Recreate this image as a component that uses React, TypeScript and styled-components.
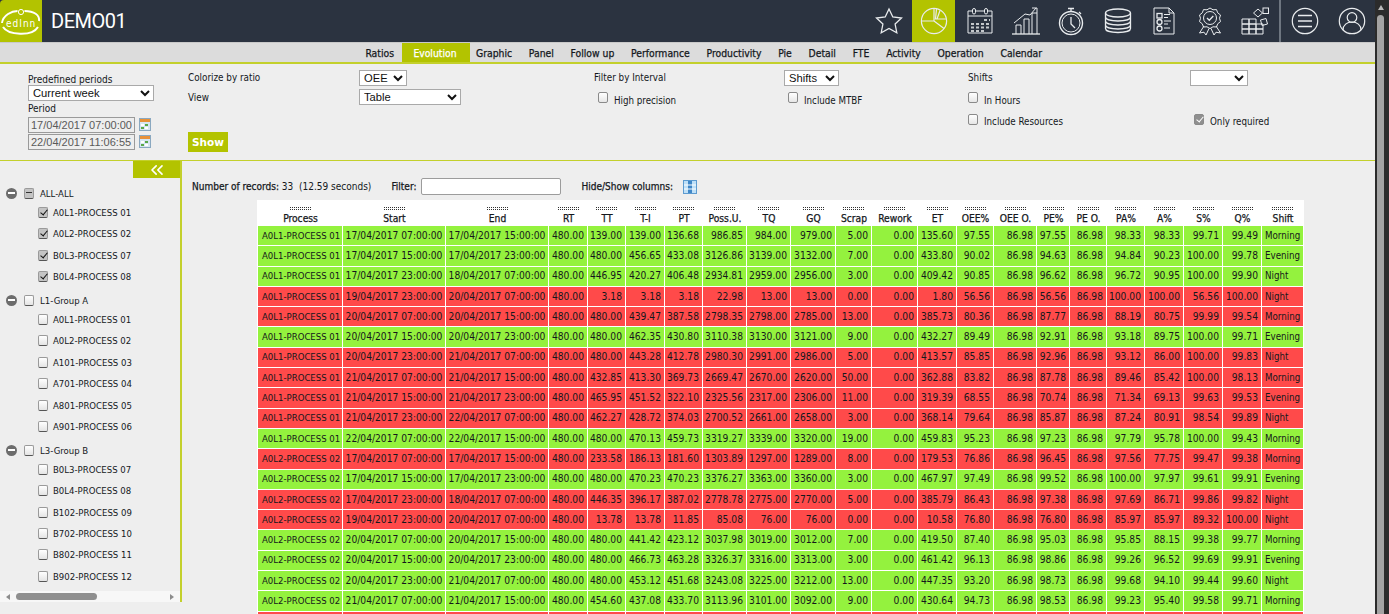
import React from 'react';
import styled, { createGlobalStyle } from 'styled-components';
import { ChevronsLeft } from 'lucide-react';

const GlobalStyle = createGlobalStyle`
  html, body {
    margin: 0;
    height: 100%;
    overflow: hidden;
    background: #eeeeee;
  }
  * { box-sizing: border-box; }
  #root {
    height: 100%;
    font-family: 'DejaVu Sans Condensed', 'DejaVu Sans', sans-serif;
    font-size: 10px;
    color: #14181c;
  }
`;

const Page = styled.div`
  display: flex;
  height: 614px;
  overflow: hidden;
`;

const Main = styled.div`
  flex: 1;
  min-width: 0;
  display: flex;
  flex-direction: column;
  overflow: hidden;
`;

const Rail = styled.div`
  width: 14px;
  background: #2b2b2b;
  padding: 5px 5px 0 2px;
  display: flex;
  flex-direction: column;
  align-items: center;
  gap: 5px;
`;

const RailArrow = styled.div`
  width: 0;
  height: 0;
  border-left: 3.5px solid transparent;
  border-right: 3.5px solid transparent;
  border-bottom: 5px solid #b8b8b8;
`;

const RailThumb = styled.div`
  width: 7px;
  flex: 1;
  background: #a3a3a3;
  border-radius: 4px 4px 0 0;
`;

const Header = styled.header`
  display: flex;
  align-items: stretch;
  height: 43px;
  flex: none;
  background: #2b3340;
  border-bottom: 1px solid #c9c9c9;
`;

const Logo = styled.div`
  width: 42px;
  background: #b3c300;
  border-top-left-radius: 4px;
  display: flex;
  align-items: center;
  justify-content: center;
`;

const Title = styled.h1`
  margin: 0 0 0 9px;
  align-self: center;
  font-family: Roboto, sans-serif;
  font-weight: 400;
  font-size: 20px;
  letter-spacing: -0.5px;
  color: #ffffff;
`;

const IconBar = styled.div`
  margin-left: auto;
  display: flex;
  align-items: stretch;
`;

const IconCell = styled.div<{ $w: number; $active?: boolean }>`
  width: ${({ $w }) => $w}px;
  display: flex;
  align-items: center;
  justify-content: center;
  background: ${({ $active }) => ($active ? '#b3c300' : 'transparent')};
`;

const Divider = styled.div`
  width: 2px;
  margin: 0 0 0 1px;
  background: #6e7680;
`;

const NavBar = styled.nav`
  display: flex;
  align-items: stretch;
  flex: none;
  height: 21px;
  padding-left: 357px;
  background: #dcdcdc;
  border-bottom: 2px solid #c3d02c;
`;

const NavItem = styled.a<{ $active?: boolean }>`
  display: flex;
  align-items: center;
  padding: ${({ $active }) => ($active ? '0 13px 0 11px' : '0 8.4px')};
  margin-right: ${({ $active }) => ($active ? '-2px' : '0')};
  font-size: 10.3px;
  -webkit-text-stroke: 0.25px currentColor;
  color: ${({ $active }) => ($active ? '#ffffff' : '#14181c')};
  background: ${({ $active }) => ($active ? '#b3c300' : 'transparent')};
`;

const FilterBar = styled.section`
  display: flex;
  flex: none;
  height: 97px;
  padding: 5px 0 0 28px;
  border-bottom: 1px solid #c3d02c;
`;

const PeriodBlock = styled.div`
  width: 160px;
  padding-top: 5px;
  display: flex;
  flex-direction: column;
  align-items: flex-start;
`;

const PeriodLabel = styled.label`
  line-height: 12px;
  font-size: 10px;
`;

const RangeLabel = styled(PeriodLabel)`
  margin: 2px 0 1px;
`;

const DateRow = styled.div`
  display: flex;
  align-items: center;
  gap: 4px;
  height: 17px;
`;

const DateInput = styled.input`
  width: 107px;
  height: 16px;
  padding: 0 2px;
  border: 1px solid #9a9a9a;
  background: #eeeeee;
  color: #5a5a5a;
  font-family: 'Liberation Sans', sans-serif;
  font-size: 11px;
`;

const OptionsGrid = styled.div`
  display: grid;
  grid-template-columns: 171px 235px 190px 184px 222px auto;
  grid-template-rows: 17px 22px 21px 23px;
  align-items: center;
`;

const OptLabel = styled.span`
  font-size: 9.8px;
`;

const Select = styled.select<{ $w: number }>`
  width: ${({ $w }) => $w}px;
  height: 16px;
  padding: 0;
  border: 1px solid #a9a9a9;
  border-radius: 0;
  background-color: #ffffff;
  color: #111111;
  font-family: 'Liberation Sans', sans-serif;
  font-size: 11.2px;
`;

const PeriodSelect = styled(Select)`
  margin-top: -1px;
`;

const CheckLabel = styled.label<{ $flush?: boolean }>`
  display: flex;
  align-items: center;
  gap: 6px;
  margin-top: 6px;
  padding-left: ${({ $flush }) => ($flush ? '0' : '4px')};
  font-size: 9.7px;
`;

const ResourcesCheck = styled(CheckLabel)`
  grid-column: 5;
  grid-row: 3;
`;

const RequiredCheck = styled(CheckLabel)`
  grid-column: 6;
  grid-row: 3;
`;

const Box = styled.input`
  appearance: none;
  flex: none;
  position: relative;
  width: 10px;
  height: 11px;
  margin: -5px 0 0;
  border: 1px solid #8a8a8a;
  border-radius: 2px;
  background: linear-gradient(#ffffff, #e6e6e6);

  &:checked {
    background: #8f8f8f;
  }
  &:checked::after {
    content: '';
    position: absolute;
    left: 2.5px;
    top: 0;
    width: 3px;
    height: 6px;
    border: solid #ffffff;
    border-width: 0 1.5px 1.5px 0;
    transform: rotate(40deg);
  }
`;

const ShowButton = styled.button`
  width: 40px;
  height: 20px;
  padding: 0;
  border: none;
  background: #b3c300;
  color: #ffffff;
  font-family: 'DejaVu Sans', sans-serif;
  font-size: 10.5px;
  font-weight: 700;
  align-self: end;
  grid-column: 1;
  grid-row: 4;
`;

const Body = styled.div`
  flex: 1;
  min-height: 0;
  display: flex;
  align-items: flex-start;
`;

const Sidebar = styled.aside`
  flex: none;
  width: 182px;
  height: 441px;
  border-right: 2px solid #c3d02c;
  display: flex;
  flex-direction: column;
`;

const CollapseButton = styled.div`
  align-self: flex-end;
  flex: none;
  width: 47px;
  height: 17px;
  background: #b3c300;
  color: #ffffff;
  display: flex;
  align-items: center;
  justify-content: center;
`;

const Tree = styled.div`
  flex: 1;
  padding: 7px 0 0 6px;
`;

const GroupRow = styled.div<{ $first?: boolean }>`
  display: flex;
  align-items: center;
  height: 16.6px;
  margin-top: ${({ $first }) => ($first ? '0' : '5px')};
`;

const Collapser = styled.span`
  position: relative;
  flex: none;
  width: 11px;
  height: 11px;
  margin-right: 7px;
  border-radius: 50%;
  background: #6c6c6c;

  &::after {
    content: '';
    position: absolute;
    left: 2px;
    right: 2px;
    top: 4.5px;
    height: 2px;
    background: #ffffff;
  }
`;

const TreeBox = styled.span<{ $state?: 'checked' | 'mixed' }>`
  position: relative;
  flex: none;
  width: 10px;
  height: 11px;
  border: 1px solid #9a9a9a;
  border-bottom-color: #555555;
  border-radius: 2px;
  background: ${({ $state }) => ($state ? '#c4c4c4' : 'linear-gradient(#ffffff, #e4e4e4)')};

  &::after {
    content: '';
    position: absolute;
    ${({ $state }) =>
      $state === 'checked'
        ? `left: 2.5px; top: 0; width: 3px; height: 6px; border: solid #111; border-width: 0 1.5px 1.5px 0; transform: rotate(40deg);`
        : $state === 'mixed'
          ? `left: 1px; right: 1px; top: 3.5px; height: 1px; background: #333;`
          : ''}
  }
`;

const ChildRow = styled.div`
  display: flex;
  align-items: center;
  height: 21.4px;
  padding-left: 32px;
`;

const TreeText = styled.span`
  margin-left: 6px;
  font-size: 9.5px;
  white-space: nowrap;
`;

const ChildText = styled(TreeText)`
  margin-left: 5px;
`;

const HScroll = styled.div`
  flex: none;
  height: 11px;
  background: #f7f7f7;
  display: flex;
  align-items: center;
  padding: 0 6px;
  gap: 6px;
`;

const HArrow = styled.span<{ $right?: boolean }>`
  flex: none;
  width: 0;
  height: 0;
  border-top: 3.5px solid transparent;
  border-bottom: 3.5px solid transparent;
  ${({ $right }) => ($right ? 'border-left: 4px solid #8c8c8c; margin-left: auto;' : 'border-right: 4px solid #8c8c8c;')}
`;

const HThumb = styled.span`
  width: 81px;
  height: 7px;
  border-radius: 4px;
  background: #8f8f8f;
`;

const Content = styled.div`
  flex: 1;
  min-width: 0;
  padding: 17px 0 0 10px;
`;

const Toolbar = styled.div`
  display: flex;
  align-items: center;
  height: 17px;
  font-size: 10px;
`;

const Strong = styled.span`
  font-size: 10px;
  -webkit-text-stroke: 0.25px currentColor;
`;

const FilterField = styled.label`
  display: flex;
  align-items: center;
  gap: 5px;
  margin-left: 20px;
`;

const FilterInput = styled.input`
  width: 140px;
  height: 17px;
  padding: 0 2px;
  border: 1px solid #9c9c9c;
  border-radius: 2px;
  background: #ffffff;
`;

const ColumnToggle = styled.div`
  display: flex;
  align-items: center;
  gap: 10px;
  margin-left: 20px;
`;

const Grid = styled.table`
  margin: 5px 0 0 65px;
  width: 1047px;
  table-layout: fixed;
  border-collapse: separate;
  border-spacing: 0;
  background: #ffffff;
  border-left: 1px solid #ffffff;
`;

const HeadCell = styled.th`
  height: 26px;
  padding: 7px 0 0;
  vertical-align: top;
  text-align: center;
  font-size: 10.2px;
  font-weight: 400;
  -webkit-text-stroke: 0.25px currentColor;
  line-height: 13px;
  white-space: nowrap;
  overflow: hidden;
`;

const Grip = styled.span`
  display: block;
  width: 22px;
  height: 3px;
  margin: 0 auto 2px;
  background:
    repeating-linear-gradient(90deg, #333333 0 1px, transparent 1px 2px) 0 0 / 100% 1px no-repeat,
    repeating-linear-gradient(90deg, #333333 0 1px, transparent 1px 2px) 0 2px / 100% 1px no-repeat;
`;

const Row = styled.tr<{ $bad: boolean }>`
  height: 20.3px;
  background: ${({ $bad }) => ($bad ? '#ff4a4a' : '#94f23e')};
`;

const Cell = styled.td<{ $align?: 'left' | 'center' }>`
  padding: ${({ $align }) => ($align === 'center' ? '0' : $align === 'left' ? '0 0 0 3px' : '0 3px 0 0')};
  border-right: 1px solid #ffffff;
  border-bottom: 1px solid #ffffff;
  text-align: ${({ $align }) => $align ?? 'right'};
  font-size: 10.2px;
  line-height: 12px;
  white-space: nowrap;
  overflow: hidden;
`;

const ProcessCell = styled(Cell)`
  padding-left: 4px;
  font-size: 9.5px;
`;

const ShiftCell = styled(Cell)`
  font-size: 9.7px;
`;

const line = { fill: 'none', stroke: '#e9ecee', strokeWidth: 1 };

const LogoMark = () => (
  <svg width="42" height="36" viewBox="0 0 42 36">
    <path d="M2 20C3 12 12 8 17.500 8M24.500 8C34 8 40 12 39 18" fill="none" stroke="#fff" strokeWidth="2" />
    <path d="M3 24C8 32 32 34 38 24" fill="none" stroke="#fff" strokeWidth="2" />
    <circle cx="21" cy="9" r="2.600" fill="none" stroke="#fff" strokeWidth="1" />
    <text x="6" y="24" fontFamily="'DejaVu Sans Condensed', sans-serif" fontSize="10" fill="#fff" letterSpacing="1">
      edInn
    </text>
  </svg>
);

const StarIcon = () => (
  <svg width="30" height="30" viewBox="0 0 30 30" {...line}>
    <path d="M15 3l3.800 8 8.700 1-6.400 6 1.700 8.700L15 22.400l-7.800 4.300 1.700-8.700-6.400-6 8.700-1z" strokeWidth="1.300" />
  </svg>
);

const PieIcon = () => (
  <svg width="30" height="30" viewBox="0 0 30 30" {...line}>
    <circle cx="15" cy="15" r="12.600" strokeWidth="1.200" />
    <path d="M15 15H2.400M15 15V2.400M15 15l10 7.600M17.500 3l-1 10 10.500 0M21 4.500l-3 8.500" strokeWidth="1.200" />
  </svg>
);

const CalendarIcon = () => (
  <svg width="30" height="30" viewBox="0 0 30 30" {...line}>
    <path d="M7 5H3v22h24V5h-4M11 5h8" />
    <rect x="7.500" y="2.500" width="3" height="5.500" rx="1.500" />
    <rect x="19.500" y="2.500" width="3" height="5.500" rx="1.500" />
    <path d="M3 10h24" />
    <path
      d="M6 18h3M11 18h3M16 18h3M21 18h3M6 21.500h3M11 21.500h3M16 21.500h3M21 21.500h3M6 25h3M11 25h3M16 25h3M19 14h3M24 14h1"
      strokeWidth="2"
      stroke="#c4c8cb"
    />
  </svg>
);

const ChartIcon = () => (
  <svg width="30" height="30" viewBox="0 0 30 30" {...line}>
    <path d="M1 28h28" strokeWidth="1.300" />
    <path d="M5 28v-9h5v9M13 28V13h5v15M21 28V7h5v21" />
    <path d="M3 17L14 8l5 1 6-7" />
    <path d="M21 2h5v5" />
  </svg>
);

const WatchIcon = () => (
  <svg width="30" height="30" viewBox="0 0 30 30" {...line}>
    <circle cx="15" cy="17" r="11.500" strokeWidth="1.400" />
    <circle cx="15" cy="17" r="9" />
    <path d="M15 11v7l4 4M12 2.500h6M15 3v3M23 6l2 2" strokeWidth="1.300" />
  </svg>
);

const CoinsIcon = () => (
  <svg width="30" height="28" viewBox="0 0 30 28" {...line}>
    <ellipse cx="15" cy="6" rx="12.500" ry="4" strokeWidth="1.300" />
    <path
      d="M2.500 6v15.500c0 2.500 5.600 4 12.500 4s12.500-1.500 12.500-4V6M2.500 10c0 2.500 5.600 4 12.500 4s12.500-1.500 12.500-4M2.500 14c0 2.500 5.600 4 12.500 4s12.500-1.500 12.500-4M2.500 18c0 2.500 5.600 4 12.500 4s12.500-1.500 12.500-4"
      strokeWidth="1.300"
    />
  </svg>
);

const ChecklistIcon = () => (
  <svg width="30" height="30" viewBox="0 0 30 30" {...line}>
    <path d="M5 2h15l5 5v21H5z" />
    <path d="M20 2v5h5" />
    <rect x="8" y="7.500" width="5" height="4.500" strokeWidth="1.300" />
    <circle cx="10.500" cy="16" r="2.500" strokeWidth="1.300" />
    <circle cx="10.500" cy="22.500" r="2.500" strokeWidth="1.300" />
    <path d="M15 8.500h6M15 11.500h4M15 15h7M15 18h4M15 22h6" />
  </svg>
);

const AwardIcon = () => (
  <svg width="30" height="30" viewBox="0 0 30 30" {...line}>
    <path d="M15 2l3 1.800 3.500-.2 1.200 3.200 2.800 2.200-1 3.300 1 3.300-2.800 2.200-1.200 3.200-3.500-.2-3 1.800-3-1.800-3.500.2-1.200-3.200-2.800-2.200 1-3.300-1-3.300 2.800-2.200 1.200-3.200 3.500.2z" />
    <circle cx="15" cy="12" r="6.500" />
    <path d="M12 12l2.300 2.300 4-4.300" strokeWidth="1.300" />
    <path d="M9 20l-4.500 7 4.500-.8 2 2.800 3-6.500M21 20l4.500 7-4.500-.8-2 2.800-3-6.500" />
  </svg>
);

const BlocksIcon = () => (
  <svg width="30" height="30" viewBox="0 0 30 30" {...line}>
    <path d="M2 13h7v5H2zM9 13h7v5H9zM2 18h7v5H2zM9 18h7v5H9zM16 18h7v5h-7zM2 23h7v5H2zM9 23h7v5H9zM16 23h7v5h-7z" />
    <path d="M13.500 7l4.500-4 4.500 4-4.500 4z" />
    <rect x="23" y="2" width="5.500" height="5.500" />
    <path d="M20.500 14l5.500-1.500 1.500 5.500-5.500 1.500z" />
  </svg>
);

const MenuIcon = () => (
  <svg width="28" height="28" viewBox="0 0 28 28" {...line}>
    <circle cx="14" cy="14" r="12.700" strokeWidth="1.200" />
    <path d="M7 8.500h14M7 14h14M7 19.500h14" strokeWidth="1.400" />
  </svg>
);

const UserIcon = () => (
  <svg width="28" height="28" viewBox="0 0 28 28" {...line}>
    <circle cx="14" cy="14" r="12.700" strokeWidth="1.200" />
    <circle cx="14" cy="10.500" r="4.800" strokeWidth="1.200" />
    <path d="M5 23c0-5 4-8 9-8s9 3 9 8" strokeWidth="1.200" />
  </svg>
);

const CalendarSmall = () => (
  <svg width="12" height="13" viewBox="0 0 12 13">
    <rect x="0.500" y="0.500" width="11" height="12" fill="#d6e6f2" stroke="#8aa8c0" />
    <rect x="1" y="1" width="10" height="3" fill="#e8923a" />
    <rect x="2" y="6" width="3" height="2" fill="#ffffff" />
    <rect x="6" y="6" width="3" height="2" fill="#5aa84a" />
    <rect x="2" y="9" width="3" height="2" fill="#5aa84a" />
    <rect x="6" y="9" width="3" height="2" fill="#ffffff" />
  </svg>
);

const ColumnsIcon = () => (
  <svg width="14" height="14" viewBox="0 0 14 14">
    <rect x="0.500" y="0.500" width="13" height="13" fill="#bfe0f7" stroke="#5d9bd0" />
    <rect x="5" y="1" width="4" height="12" fill="#3f87c8" />
    <path d="M1 5h12M1 9h12" stroke="#ffffff" />
  </svg>
);

const topIcons = [
  { w: 46, icon: <StarIcon /> },
  { w: 43, icon: <PieIcon />, active: true },
  { w: 49, icon: <CalendarIcon /> },
  { w: 44, icon: <ChartIcon /> },
  { w: 46, icon: <WatchIcon /> },
  { w: 47, icon: <CoinsIcon /> },
  { w: 46, icon: <ChecklistIcon /> },
  { w: 45, icon: <AwardIcon /> },
  { w: 46, icon: <BlocksIcon /> },
];

const navItems = ['Ratios', 'Evolution', 'Graphic', 'Panel', 'Follow up', 'Performance', 'Productivity', 'Pie', 'Detail', 'FTE', 'Activity', 'Operation', 'Calendar'];

const groups = [
  { name: 'ALL-ALL', state: 'mixed' as const, checked: true, items: ['A0L1-PROCESS 01', 'A0L2-PROCESS 02', 'B0L3-PROCESS 07', 'B0L4-PROCESS 08'] },
  { name: 'L1-Group A', checked: false, items: ['A0L1-PROCESS 01', 'A0L2-PROCESS 02', 'A101-PROCESS 03', 'A701-PROCESS 04', 'A801-PROCESS 05', 'A901-PROCESS 06'] },
  { name: 'L3-Group B', checked: false, items: ['B0L3-PROCESS 07', 'B0L4-PROCESS 08', 'B102-PROCESS 09', 'B702-PROCESS 10', 'B802-PROCESS 11', 'B902-PROCESS 12'] },
];

const columns = [
  ['Process', 85], ['Start', 103], ['End', 103], ['RT', 39], ['TT', 38], ['T-I', 39], ['PT', 38], ['Poss.U.', 44], ['TQ', 44], ['GQ', 45],
  ['Scrap', 36], ['Rework', 46], ['ET', 39], ['OEE%', 37], ['OEE O.', 43], ['PE%', 33], ['PE O.', 37], ['PA%', 38], ['A%', 39], ['S%', 39], ['Q%', 39], ['Shift', 42],
] as const;

// process|start|end|numbers...|shift|r = red row
const records = [
  'A0L1-PROCESS 01|17 07|17 15|480.00 139.00 139.00 136.68 986.85 984.00 979.00 5.00 0.00 135.60 97.55 86.98 97.55 86.98 98.33 98.33 99.71 99.49|Morning|g',
  'A0L1-PROCESS 01|17 15|17 23|480.00 480.00 456.65 433.08 3126.86 3139.00 3132.00 7.00 0.00 433.80 90.02 86.98 94.63 86.98 94.84 90.23 100.00 99.78|Evening|g',
  'A0L1-PROCESS 01|17 23|18 07|480.00 446.95 420.27 406.48 2934.81 2959.00 2956.00 3.00 0.00 409.42 90.85 86.98 96.62 86.98 96.72 90.95 100.00 99.90|Night|g',
  'A0L1-PROCESS 01|19 23|20 07|480.00 3.18 3.18 3.18 22.98 13.00 13.00 0.00 0.00 1.80 56.56 86.98 56.56 86.98 100.00 100.00 56.56 100.00|Night|r',
  'A0L1-PROCESS 01|20 07|20 15|480.00 480.00 439.47 387.58 2798.35 2798.00 2785.00 13.00 0.00 385.73 80.36 86.98 87.77 86.98 88.19 80.75 99.99 99.54|Morning|r',
  'A0L1-PROCESS 01|20 15|20 23|480.00 480.00 462.35 430.80 3110.38 3130.00 3121.00 9.00 0.00 432.27 89.49 86.98 92.91 86.98 93.18 89.75 100.00 99.71|Evening|g',
  'A0L1-PROCESS 01|20 23|21 07|480.00 480.00 443.28 412.78 2980.30 2991.00 2986.00 5.00 0.00 413.57 85.85 86.98 92.96 86.98 93.12 86.00 100.00 99.83|Night|r',
  'A0L1-PROCESS 01|21 07|21 15|480.00 432.85 413.30 369.73 2669.47 2670.00 2620.00 50.00 0.00 362.88 83.82 86.98 87.78 86.98 89.46 85.42 100.00 98.13|Morning|r',
  'A0L1-PROCESS 01|21 15|21 23|480.00 465.95 451.52 322.10 2325.56 2317.00 2306.00 11.00 0.00 319.39 68.55 86.98 70.74 86.98 71.34 69.13 99.63 99.53|Evening|r',
  'A0L1-PROCESS 01|21 23|22 07|480.00 462.27 428.72 374.03 2700.52 2661.00 2658.00 3.00 0.00 368.14 79.64 86.98 85.87 86.98 87.24 80.91 98.54 99.89|Night|r',
  'A0L1-PROCESS 01|22 07|22 15|480.00 480.00 470.13 459.73 3319.27 3339.00 3320.00 19.00 0.00 459.83 95.23 86.98 97.23 86.98 97.79 95.78 100.00 99.43|Morning|g',
  'A0L2-PROCESS 02|17 07|17 15|480.00 233.58 186.13 181.60 1303.89 1297.00 1289.00 8.00 0.00 179.53 76.86 86.98 96.45 86.98 97.56 77.75 99.47 99.38|Morning|r',
  'A0L2-PROCESS 02|17 15|17 23|480.00 480.00 470.23 470.23 3376.27 3363.00 3360.00 3.00 0.00 467.97 97.49 86.98 99.52 86.98 100.00 97.97 99.61 99.91|Evening|g',
  'A0L2-PROCESS 02|17 23|18 07|480.00 446.35 396.17 387.02 2778.78 2775.00 2770.00 5.00 0.00 385.79 86.43 86.98 97.38 86.98 97.69 86.71 99.86 99.82|Night|r',
  'A0L2-PROCESS 02|19 23|20 07|480.00 13.78 13.78 11.85 85.08 76.00 76.00 0.00 0.00 10.58 76.80 86.98 76.80 86.98 85.97 85.97 89.32 100.00|Night|r',
  'A0L2-PROCESS 02|20 07|20 15|480.00 480.00 441.42 423.12 3037.98 3019.00 3012.00 7.00 0.00 419.50 87.40 86.98 95.03 86.98 95.85 88.15 99.38 99.77|Morning|g',
  'A0L2-PROCESS 02|20 15|20 23|480.00 480.00 466.73 463.28 3326.37 3316.00 3313.00 3.00 0.00 461.42 96.13 86.98 98.86 86.98 99.26 96.52 99.69 99.91|Evening|g',
  'A0L2-PROCESS 02|20 23|21 07|480.00 480.00 453.12 451.68 3243.08 3225.00 3212.00 13.00 0.00 447.35 93.20 86.98 98.73 86.98 99.68 94.10 99.44 99.60|Night|g',
  'A0L2-PROCESS 02|21 07|21 15|480.00 454.60 437.08 433.70 3113.96 3101.00 3092.00 9.00 0.00 430.64 94.73 86.98 98.53 86.98 99.23 95.40 99.58 99.71|Morning|g',
];

const fmt = (s: string) => {
  const [d, h] = s.split(' ');
  return `${d}/04/2017 ${h}:00:00`;
};

export default function App() {
  return (
    <Page>
      <GlobalStyle />
      <Main>
        <Header>
          <Logo>
            <LogoMark />
          </Logo>
          <Title>DEMO01</Title>
          <IconBar>
            {topIcons.map((t, i) => (
              <IconCell key={i} $w={t.w} $active={t.active}>
                {t.icon}
              </IconCell>
            ))}
            <Divider />
            <IconCell $w={47}>
              <MenuIcon />
            </IconCell>
            <IconCell $w={47}>
              <UserIcon />
            </IconCell>
          </IconBar>
        </Header>

        <NavBar>
          {navItems.map((n) => (
            <NavItem key={n} $active={n === 'Evolution'}>
              {n}
            </NavItem>
          ))}
        </NavBar>

        <FilterBar>
          <PeriodBlock>
            <PeriodLabel>Predefined periods</PeriodLabel>
            <PeriodSelect $w={126} defaultValue="week">
              <option value="week">Current week</option>
            </PeriodSelect>
            <RangeLabel>Period</RangeLabel>
            <DateRow>
              <DateInput readOnly value="17/04/2017 07:00:00" />
              <CalendarSmall />
            </DateRow>
            <DateRow>
              <DateInput readOnly value="22/04/2017 11:06:55" />
              <CalendarSmall />
            </DateRow>
          </PeriodBlock>

          <OptionsGrid>
            <OptLabel>Colorize by ratio</OptLabel>
            <Select $w={48} defaultValue="oee">
              <option value="oee">OEE</option>
            </Select>
            <OptLabel>Filter by Interval</OptLabel>
            <Select $w={55} defaultValue="shifts">
              <option value="shifts">Shifts</option>
            </Select>
            <OptLabel>Shifts</OptLabel>
            <Select $w={58} defaultValue="">
              <option value=""></option>
            </Select>

            <OptLabel>View</OptLabel>
            <Select $w={102} defaultValue="table">
              <option value="table">Table</option>
            </Select>
            <CheckLabel>
              <Box type="checkbox" />
              High precision
            </CheckLabel>
            <CheckLabel>
              <Box type="checkbox" />
              Include MTBF
            </CheckLabel>
            <CheckLabel $flush>
              <Box type="checkbox" />
              In Hours
            </CheckLabel>
            <span />

            <ResourcesCheck $flush>
              <Box type="checkbox" />
              Include Resources
            </ResourcesCheck>
            <RequiredCheck>
              <Box type="checkbox" defaultChecked />
              Only required
            </RequiredCheck>

            <ShowButton>Show</ShowButton>
          </OptionsGrid>
        </FilterBar>

        <Body>
          <Sidebar>
            <CollapseButton>
              <ChevronsLeft size={20} strokeWidth={2} />
            </CollapseButton>
            <Tree>
              {groups.map((g, gi) => (
                <React.Fragment key={g.name}>
                  <GroupRow $first={gi === 0}>
                    <Collapser />
                    <TreeBox $state={g.state} />
                    <TreeText>{g.name}</TreeText>
                  </GroupRow>
                  {g.items.map((it) => (
                    <ChildRow key={it}>
                      <TreeBox $state={g.checked ? 'checked' : undefined} />
                      <ChildText>{it}</ChildText>
                    </ChildRow>
                  ))}
                </React.Fragment>
              ))}
            </Tree>
            <HScroll>
              <HArrow />
              <HThumb />
              <HArrow $right />
            </HScroll>
          </Sidebar>

          <Content>
            <Toolbar>
              <Strong>Number of records:</Strong>&nbsp;33&nbsp;&nbsp;(12.59 seconds)
              <FilterField>
                <Strong>Filter:</Strong>
                <FilterInput />
              </FilterField>
              <ColumnToggle>
                <Strong>Hide/Show columns:</Strong>
                <ColumnsIcon />
              </ColumnToggle>
            </Toolbar>

            <Grid>
              <colgroup>
                {columns.map(([name, w]) => (
                  <col key={name} width={w} />
                ))}
              </colgroup>
              <thead>
                <tr>
                  {columns.map(([name]) => (
                    <HeadCell key={name}>
                      <Grip />
                      {name}
                    </HeadCell>
                  ))}
                </tr>
              </thead>
              <tbody>
                {records.map((r, i) => {
                  const [proc, start, end, nums, shift, flag] = r.split('|');
                  return (
                    <Row key={i} $bad={flag === 'r'}>
                      <ProcessCell $align="left">{proc}</ProcessCell>
                      <Cell $align="center">{fmt(start)}</Cell>
                      <Cell $align="center">{fmt(end)}</Cell>
                      {nums.split(' ').map((n, j) => (
                        <Cell key={j}>{n}</Cell>
                      ))}
                      <ShiftCell $align="left">{shift}</ShiftCell>
                    </Row>
                  );
                })}
                {/* next record only peeks in at the fold, its values are not visible */}
                <Row $bad>
                  {columns.map(([name]) => (
                    <Cell key={name} />
                  ))}
                </Row>
              </tbody>
            </Grid>
          </Content>
        </Body>
      </Main>
      <Rail>
        <RailArrow />
        <RailThumb />
      </Rail>
    </Page>
  );
}
